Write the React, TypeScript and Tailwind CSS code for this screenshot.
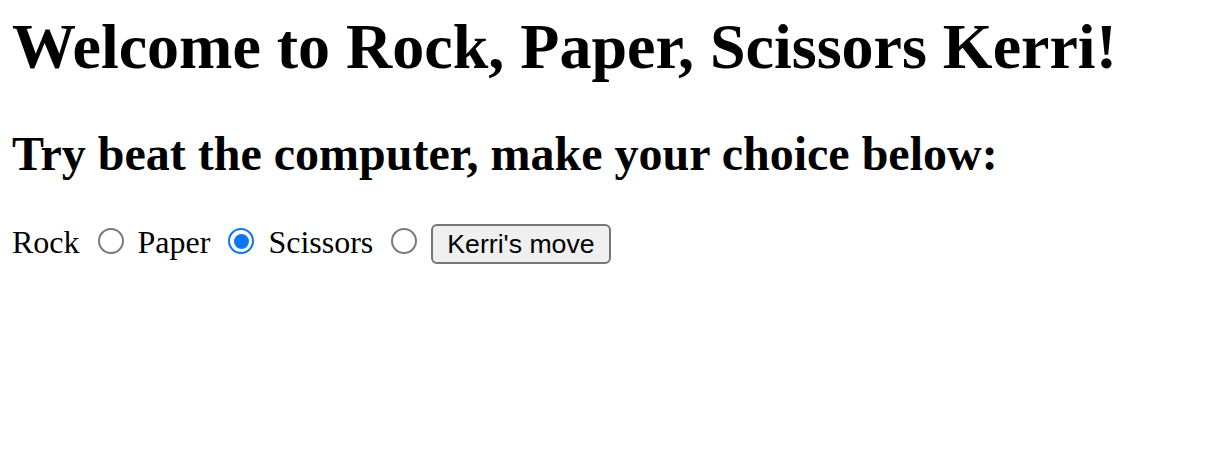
import React from "react";

function Radio({ checked }: { checked?: boolean }) {
  return checked ? (
    <span className="mt-[4px] ml-[18px] flex h-[26px] w-[26px] shrink-0 items-center justify-center rounded-full border-[2px] border-[#0b75f7] bg-white">
      <span className="h-[15px] w-[15px] rounded-full bg-[#0b75f7]" />
    </span>
  ) : (
    <span className="mt-[4px] ml-[18px] block h-[26px] w-[26px] shrink-0 rounded-full border-[2px] border-[#7a7a7a] bg-white" />
  );
}

export default function App() {
  const serif = { fontFamily: '"Liberation Serif", "Times New Roman", serif' };
  return (
    <div className="min-h-[470px] w-[1222px] bg-white pl-[12px] pt-[10px] text-black" style={serif}>
      <h1 className="m-0 text-[64px] font-bold leading-[74px] whitespace-nowrap">
        Welcome to Rock, Paper, Scissors Kerri!
      </h1>
      <h2 className="mt-[42px] text-[48px] font-bold leading-[55px] whitespace-nowrap">
        Try beat the computer, make your choice below:
      </h2>
      <div className="mt-[43px] flex items-start text-[32px] leading-[37px]">
        <span>Rock</span>
        <Radio />
        <span className="ml-[14px]">Paper</span>
        <Radio checked />
        <span className="ml-[14px]">Scissors</span>
        <Radio />
        <button
          type="button"
          className="ml-[14px] flex h-[40px] items-center rounded-[6px] border-[2px] border-[#767676] bg-[#efefef] px-[14px] text-[26.67px] leading-[31px] text-black"
          style={{ fontFamily: '"Liberation Sans", Arial, sans-serif' }}
        >
          Kerri's move
        </button>
      </div>
    </div>
  );
}
